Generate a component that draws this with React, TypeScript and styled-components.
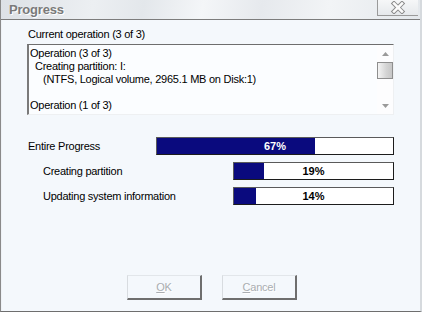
import React from "react";
import styled, { createGlobalStyle } from "styled-components";

const Global = createGlobalStyle`
  html, body { margin: 0; padding: 0; width: 422px; height: 312px; overflow: hidden; background: #f4f8fc; }
  #root { width: 422px; height: 312px; }
`;

const Window = styled.div`
  width: 422px;
  height: 312px;
  box-sizing: border-box;
  display: flex;
  flex-direction: column;
  background: #f4f8fc;
  border-left: 1px solid #8a8a8a;
  border-right: 2px solid #d6dade;
  border-bottom: 1px solid #6e6e6e;
  font-family: "Liberation Sans", Arial, sans-serif;
  font-size: 11px;
  letter-spacing: -0.25px;
  color: #000;
`;

const TitleBar = styled.div`
  height: 19px;
  flex: none;
  display: flex;
  align-items: flex-start;
  justify-content: space-between;
  border-bottom: 1px solid #7c7c7c;
  background: linear-gradient(
    100deg,
    #dde1e6 0%,
    #eceff2 22%,
    #e3e7eb 34%,
    #f4f6f8 48%,
    #e6e9ed 62%,
    #f2f4f6 78%,
    #e4e8ec 100%
  );
`;

const Title = styled.span`
  padding: 3px 0 0 8px;
  font-weight: bold;
  font-size: 13px;
  letter-spacing: -0.2px;
  line-height: 14px;
  color: #7a7a7a;
  text-shadow: 1px 1px 0 #ffffff;
`;

const CloseButton = styled.div`
  width: 40px;
  height: 15px;
  margin-right: 2px;
  display: flex;
  align-items: center;
  justify-content: center;
  border-left: 1px solid #9a9a9a;
  border-bottom: 1px solid #9a9a9a;
  background: linear-gradient(#f6f7f8, #e6e9ec);
`;

const Body = styled.div`
  flex: 1;
  display: flex;
  flex-direction: column;
  padding: 8px 26px 11px 25px;
  border-left: 1px solid #eef2f6;
`;

const SectionLabel = styled.div`
  line-height: 13px;
  height: 13px;
  padding-left: 1px;
`;

const ListBox = styled.div`
  margin-top: 3px;
  height: 71px;
  box-sizing: border-box;
  display: flex;
  background: #fbfdff;
  border-top: 1px solid #6e6e6e;
  border-left: 2px solid #7a7a7a;
  border-bottom: 1px solid #eef0f2;
  border-right: 1px solid #eef0f2;
`;

const ListText = styled.div`
  flex: 1;
  padding: 2px 0 0 1px;
  overflow: hidden;
`;

const ListLine = styled.div<{ $indent: number }>`
  height: 13px;
  line-height: 13px;
  padding-left: ${(p) => p.$indent}px;
  white-space: pre;
`;

const ScrollBar = styled.div`
  width: 16px;
  flex: none;
  display: flex;
  flex-direction: column;
  background: #fdfdfe;
`;

const ScrollArrow = styled.div`
  height: 17px;
  flex: none;
  display: flex;
  align-items: center;
  justify-content: center;
`;

const ScrollThumb = styled.div`
  height: 17px;
  flex: none;
  box-sizing: border-box;
  border: 1px solid #8e8e8e;
  background: linear-gradient(90deg, #f4f4f4, #d4d4d4 60%, #c6c6c6);
`;

const ScrollTrack = styled.div`
  flex: 1;
`;

const ProgressList = styled.div`
  margin-top: 22px;
  display: flex;
  flex-direction: column;
  gap: 7px;
`;

const ProgressRow = styled.div`
  display: flex;
  align-items: center;
  justify-content: space-between;
  height: 18px;
`;

const RowLabel = styled.span<{ $indent: number }>`
  padding-left: ${(p) => p.$indent}px;
  line-height: 13px;
`;

const Bar = styled.div<{ $width: number }>`
  position: relative;
  width: ${(p) => p.$width}px;
  height: 18px;
  box-sizing: border-box;
  background: #ffffff;
  border: 1px solid #1c1c1c;
  border-top-color: #5a5a5a;
  border-left-color: #5a5a5a;
  overflow: hidden;
`;

const BarFill = styled.div`
  height: 100%;
  background: #0a0a7e;
`;

const BarText = styled.span<{ $light: boolean }>`
  position: absolute;
  inset: 0;
  display: flex;
  align-items: center;
  justify-content: center;
  font-weight: bold;
  font-size: 11px;
  letter-spacing: 0;
  color: ${(p) => (p.$light ? "#ffffff" : "#000000")};
`;

const ButtonRow = styled.div`
  margin-top: auto;
  display: flex;
  justify-content: center;
  gap: 20px;
  padding-left: 3px;
`;

const DialogButton = styled.button`
  width: 75px;
  height: 25px;
  padding: 0;
  box-sizing: border-box;
  background: #f4f8fc;
  border-style: solid;
  border-width: 1px 2px 2px 1px;
  border-color: #e2e6ea #6e6e6e #6e6e6e #d8dce0;
  font-family: "Liberation Sans", Arial, sans-serif;
  font-size: 11px;
  letter-spacing: -0.2px;
  color: #a9adb1;
  text-shadow: 1px 1px 0 #ffffff;
`;

const Underline = styled.span`
  text-decoration: underline;
`;

const lines: { text: string; indent: number }[] = [
  { text: "Operation (3 of 3)", indent: 0 },
  { text: "Creating partition: I:", indent: 5 },
  { text: "(NTFS, Logical volume, 2965.1 MB on Disk:1)", indent: 13 },
  { text: "", indent: 0 },
  { text: "Operation (1 of 3)", indent: 0 },
];

const rows = [
  { label: "Entire Progress", indent: 1, width: 238, pct: 67 },
  { label: "Creating partition", indent: 16, width: 161, pct: 19 },
  { label: "Updating system information", indent: 16, width: 161, pct: 14 },
];

const CloseIcon = () => (
  <svg width="16" height="13" viewBox="0 0 16 13">
    <path d="M4 2.5 L12 10.5 M12 2.5 L4 10.5" stroke="#8a8a8a" strokeWidth="4.5" strokeLinecap="square" fill="none" />
    <path d="M4 2.5 L12 10.5 M12 2.5 L4 10.5" stroke="#fbfbfb" strokeWidth="2.5" strokeLinecap="square" fill="none" />
  </svg>
);

const Arrow = ({ up }: { up: boolean }) => (
  <svg width="7" height="4" viewBox="0 0 7 4">
    <path d={up ? "M0 4 L3.5 0 L7 4 Z" : "M0 0 L7 0 L3.5 4 Z"} fill="#9a9a9a" />
  </svg>
);

export default function App() {
  return (
    <>
      <Global />
      <Window>
        <TitleBar>
          <Title>Progress</Title>
          <CloseButton>
            <CloseIcon />
          </CloseButton>
        </TitleBar>
        <Body>
          <SectionLabel>Current operation (3 of 3)</SectionLabel>
          <ListBox>
            <ListText>
              {lines.map((l, i) => (
                <ListLine key={i} $indent={l.indent}>
                  {l.text}
                </ListLine>
              ))}
            </ListText>
            <ScrollBar>
              <ScrollArrow>
                <Arrow up />
              </ScrollArrow>
              <ScrollThumb />
              <ScrollTrack />
              <ScrollArrow>
                <Arrow up={false} />
              </ScrollArrow>
            </ScrollBar>
          </ListBox>
          <ProgressList>
            {rows.map((r) => (
              <ProgressRow key={r.label}>
                <RowLabel $indent={r.indent}>{r.label}</RowLabel>
                <Bar $width={r.width}>
                  <BarFill style={{ width: `${r.pct}%` }} />
                  <BarText $light={r.pct > 50}>{r.pct}%</BarText>
                </Bar>
              </ProgressRow>
            ))}
          </ProgressList>
          <ButtonRow>
            <DialogButton disabled>
              <Underline>O</Underline>K
            </DialogButton>
            <DialogButton disabled>
              <Underline>C</Underline>ancel
            </DialogButton>
          </ButtonRow>
        </Body>
      </Window>
    </>
  );
}
